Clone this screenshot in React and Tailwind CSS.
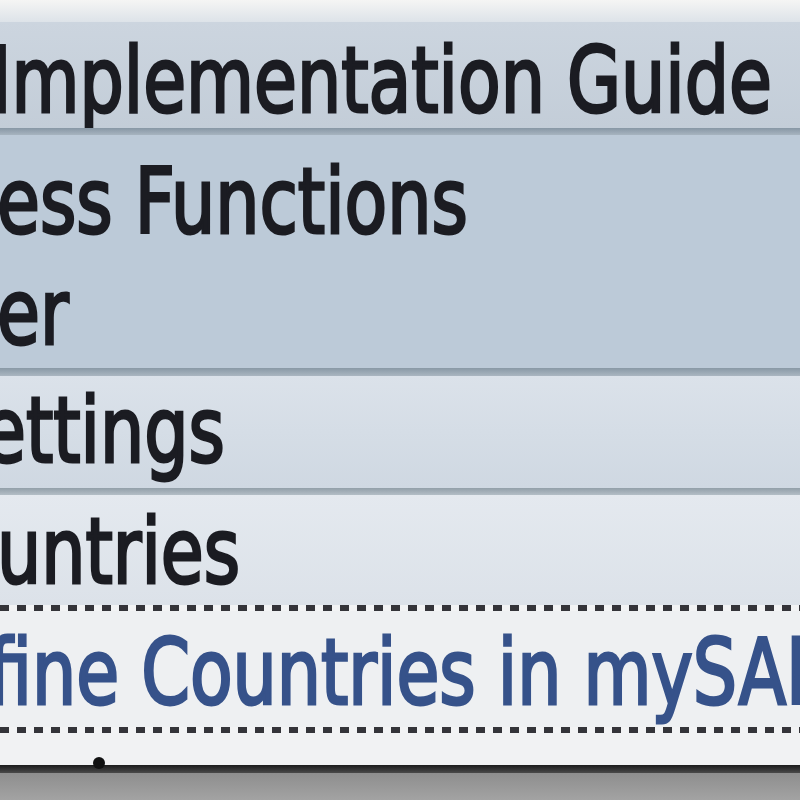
const Label = ({ text, className }) => (
  <span
    className={`inline-block whitespace-nowrap origin-left scale-x-[0.775] text-[90px] leading-[90px] [-webkit-text-stroke:3px_currentColor] ${className}`}
  >
    {text}
  </span>
);

const Dots = () => (
  <div className="h-[6px] bg-[linear-gradient(to_right,#1f1f24_0_9px,transparent_9px_17px)] bg-size-[17px_6px] bg-repeat-x opacity-90" />
);

export default function App() {
  return (
    <div className="w-[800px] h-[800px] overflow-hidden bg-[#f2f3f4] font-['DejaVu_Sans',sans-serif] text-[#1b1c22]">
      {/* top edge */}
      <div className="h-[22px] bg-gradient-to-b from-[#f5f5f4] to-[#dde3e9]" />

      {/* Implementation Guide */}
      <div className="h-[106px] bg-gradient-to-b from-[#ccd5df] to-[#c3cdd8] pt-[14px] overflow-hidden">
        <Label text="Implementation Guide" className="ml-[-9px]" />
      </div>
      <div className="h-[7px] bg-gradient-to-b from-[#8797a5] to-[#a7b4c0]" />

      {/* Business Functions / ...er */}
      <div className="h-[233px] bg-[#bccad8] pt-[11px] overflow-hidden flex flex-col">
        <div className="h-[112px] flex items-center">
          <Label text="ess Functions" className="ml-[-3px]" />
        </div>
        <div className="h-[112px] flex items-center">
          <Label text="er" className="ml-[-3px]" />
        </div>
      </div>
      <div className="h-[8px] bg-gradient-to-b from-[#8999a6] to-[#aab6c1]" />

      {/* Settings */}
      <div className="h-[112px] bg-gradient-to-b from-[#dbe2ea] to-[#cfd8e2] pt-[10px] overflow-hidden">
        <Label text="ettings" className="ml-[-17px]" />
      </div>
      <div className="h-[7px] bg-gradient-to-b from-[#929fa9] to-[#b3bec6]" />

      {/* Countries */}
      <div className="h-[110px] bg-gradient-to-b from-[#e4e9ef] to-[#dce2e9] pt-[12px] overflow-hidden">
        <Label text="untries" className="ml-[-3px]" />
      </div>

      {/* selected leaf */}
      <Dots />
      <div className="h-[116px] bg-[#eef0f2] pt-[17px] overflow-hidden">
        <Label
          text="fine Countries in mySAP Systems"
          className="ml-[-12px] text-[#36528a]"
        />
      </div>
      <Dots />

      {/* bottom of tree */}
      <div className="relative h-[32px] bg-[#f1f2f3]">
        <span className="absolute left-[93px] bottom-[-4px] w-[12px] h-[12px] rounded-full bg-[#111]" />
      </div>
      <div className="h-[8px] bg-gradient-to-b from-[#1c1c1c] to-[#4a4a4a]" />
      <div className="h-[60px] bg-gradient-to-b from-[#8e8e8e] to-[#bdbdbd]" />
    </div>
  );
}
